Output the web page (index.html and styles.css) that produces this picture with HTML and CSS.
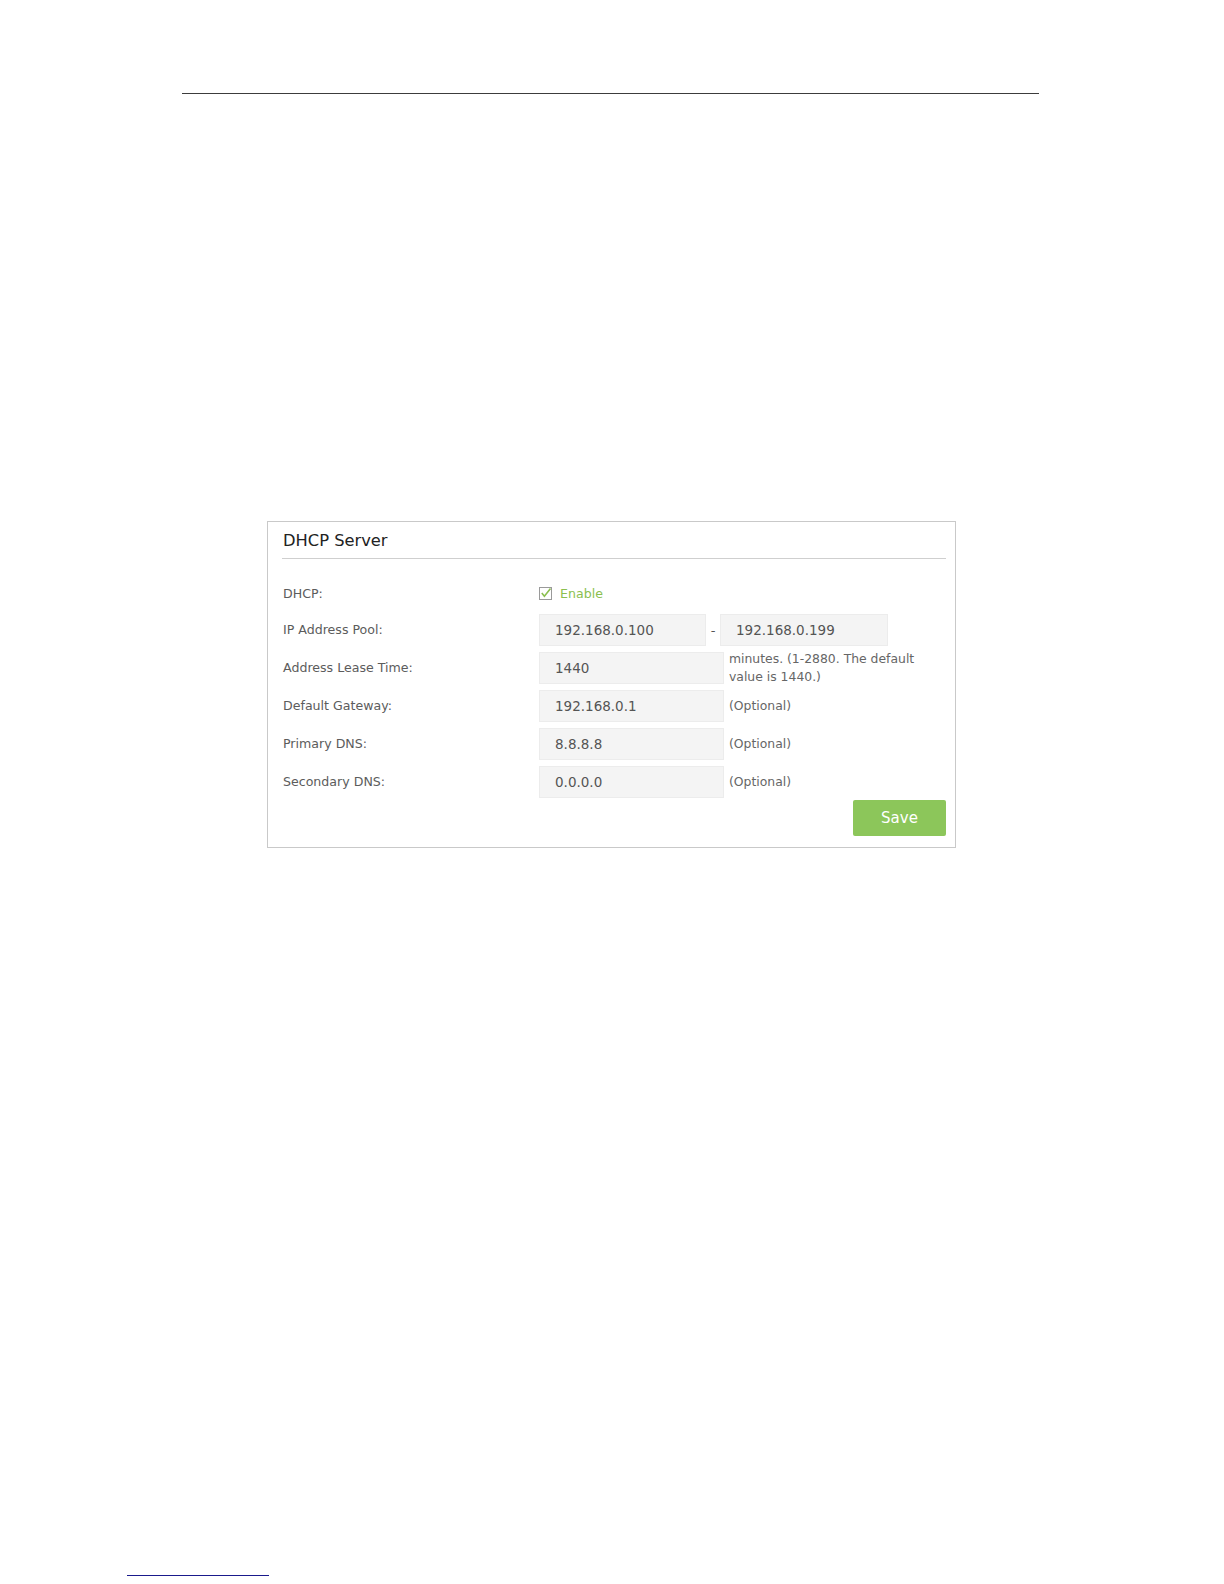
FILE: index.html
```html
<!DOCTYPE html>
<html lang="en">
<head>
    <meta charset="UTF-8" />
    <title>DHCP Server</title>
    <link rel="stylesheet" href="styles.css">
</head>
<body>
    <div class="page">
        <div class="top-rule"></div>

        <div class="panel">
            <div class="panel-head">
                <h2>DHCP Server</h2>
            </div>
            <div class="form">
                <div class="label first">DHCP:</div>
                <div class="field first">
                    <label class="check">
                        <span class="box">
                            <svg width="13" height="13" viewBox="0 0 13 13">
                                <rect x="0.5" y="0.5" width="12" height="12" fill="#fff" stroke="#9a9a9a" />
                                <path d="M2.8 6 L5.4 9.2 L11.5 1.6" fill="none" stroke="#8bbf4f" stroke-width="1.6" />
                            </svg>
                        </span>
                        <span class="check-text">Enable</span>
                    </label>
                </div>

                <div class="label">IP Address Pool:</div>
                <div class="field">
                    <div class="input short">192.168.0.100</div>
                    <span class="dash">-</span>
                    <div class="input short">192.168.0.199</div>
                </div>

                <div class="label">Address Lease Time:</div>
                <div class="field">
                    <div class="input">1440</div>
                    <span class="hint">minutes. (1-2880. The default value is 1440.)</span>
                </div>

                <div class="label">Default Gateway:</div>
                <div class="field">
                    <div class="input">192.168.0.1</div>
                    <span class="hint">(Optional)</span>
                </div>

                <div class="label">Primary DNS:</div>
                <div class="field">
                    <div class="input">8.8.8.8</div>
                    <span class="hint">(Optional)</span>
                </div>

                <div class="label">Secondary DNS:</div>
                <div class="field">
                    <div class="input">0.0.0.0</div>
                    <span class="hint">(Optional)</span>
                </div>
            </div>
            <div class="actions">
                <a href="javascript:;" class="btn-save">Save</a>
            </div>
        </div>

        <div class="foot-rule"></div>
    </div>
</body>
</html>
```

FILE: styles.css
```css
*{
    box-sizing: border-box;
}
body{
    margin: 0;
    background: #fff;
    font-family: "DejaVu Sans", Verdana, sans-serif;
}
.page{
    padding-top: 93px;
}
.top-rule{
    margin-left: 182px;
    width: 857px;
    height: 1px;
    background: #3c3c3c;
}
.panel{
    margin: 427px 0 0 267px;
    width: 689px;
    border: 1px solid #c9c9c9;
    padding: 0 9px 11px 14px;
}
.panel-head{
    padding: 9px 0 7px 1px;
    border-bottom: 1px solid #cfcfcf;
}
.panel-head h2{
    margin: 0;
    font-size: 16.3px;
    line-height: 20px;
    font-weight: normal;
    color: #222;
}
.form{
    margin-top: 17px;
    display: grid;
    grid-template-columns: 257px 1fr;
    grid-auto-rows: 32px;
    row-gap: 6px;
}
.label{
    padding-left: 1px;
    font-size: 12.6px;
    line-height: 32px;
    color: #5c5c5c;
}
.label.first{
    padding-top: 2px;
}
.field{
    display: flex;
    align-items: center;
}
.field.first{
    padding-top: 2px;
}
.check{
    display: flex;
    align-items: center;
}
.box{
    width: 13px;
    height: 13px;
    display: block;
}
.box svg{
    display: block;
}
.check-text{
    margin-left: 8px;
    font-size: 12.6px;
    color: #8bbf4f;
}
.input{
    width: 185px;
    height: 32px;
    line-height: 30px;
    padding-left: 15px;
    background: #f4f4f4;
    border: 1px solid #ececec;
    font-size: 13.5px;
    color: #555;
}
.input.short{
    width: 167px;
}
.input.short:last-child{
    width: 168px;
}
.dash{
    width: 14px;
    text-align: center;
    font-size: 13px;
    color: #555;
}
.hint{
    margin-left: 5px;
    width: 205px;
    font-size: 12.4px;
    line-height: 18px;
    color: #666;
}
.actions{
    margin-top: 2px;
    display: flex;
    justify-content: flex-end;
}
.btn-save{
    width: 93px;
    height: 36px;
    line-height: 36px;
    text-align: center;
    background: #8cc65a;
    border-radius: 2px;
    color: #fff;
    font-size: 15px;
    text-decoration: none;
}
.foot-rule{
    margin: 727px 0 0 127px;
    width: 142px;
    height: 1px;
    background: #1a1a8c;
}
```
